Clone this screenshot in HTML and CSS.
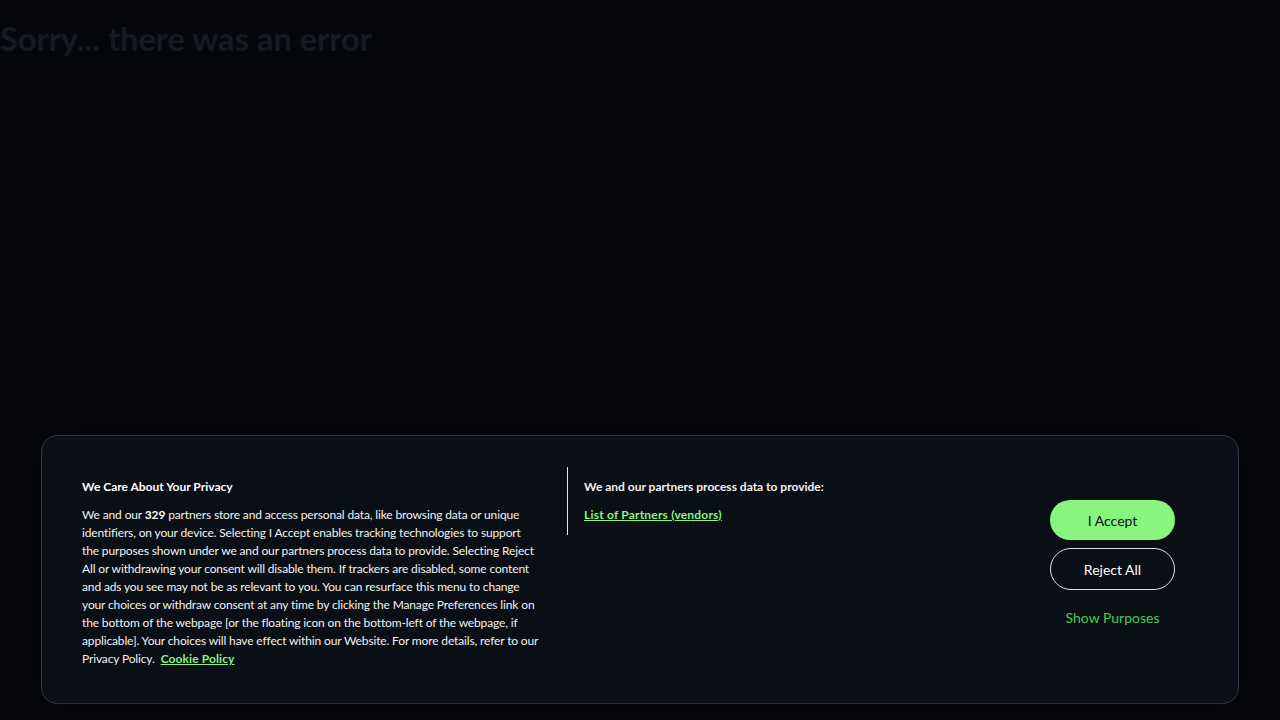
FILE: index.html
```html
<!DOCTYPE html>
<html lang="en">
<head>
<meta charset="utf-8">
<title>Error</title>
<link rel="stylesheet" href="styles.css">
</head>
<body>
<h1 class="error-title">Sorry... there was an error</h1>
<div class="consent">
  <div class="consent-inner">
    <div class="col-policy">
      <h2 class="policy-title">We Care About Your Privacy</h2>
      <p class="policy-text">We and our <strong>329</strong> partners store and access personal data, like browsing data or unique<br>identifiers, on your device. Selecting I Accept enables tracking technologies to support<br>the purposes shown under we and our partners process data to provide. Selecting Reject<br>All or withdrawing your consent will disable them. If trackers are disabled, some content<br>and ads you see may not be as relevant to you. You can resurface this menu to change<br>your choices or withdraw consent at any time by clicking the Manage Preferences link on<br>the bottom of the webpage [or the floating icon on the bottom-left of the webpage, if<br>applicable]. Your choices will have effect within our Website. For more details, refer to our<br>Privacy Policy. <a class="link" href="#">Cookie Policy</a></p>
    </div>
    <div class="col-purposes">
      <h3 class="purposes-title">We and our partners process data to provide:</h3>
      <a class="link" href="#">List of Partners (vendors)</a>
    </div>
    <div class="col-buttons">
      <button class="btn btn-accept">I Accept</button>
      <button class="btn btn-reject">Reject All</button>
      <button class="btn-text">Show Purposes</button>
    </div>
  </div>
</div>
</body>
</html>
```
FILE: styles.css
```css
html, body {
  margin: 0;
  padding: 0;
  background: #05070b;
  height: 100%;
}
body {
  font-family: Lato, "Liberation Sans", sans-serif;
  color: #ffffff;
  position: relative;
  overflow: hidden;
}
.error-title {
  margin: 0;
  padding-top: 19px;
  font-size: 32.6px;
  line-height: 40px;
  font-weight: 700;
  color: #141a23;
}
.consent {
  position: absolute;
  left: 41px;
  top: 435px;
  width: 1198px;
  height: 269px;
  box-sizing: border-box;
  background: #0a0e15;
  border: 1px solid #2b3447;
  border-radius: 16px;
  box-shadow: 0 0 40px rgba(0,0,0,0.5);
}
.consent-inner {
  display: flex;
  align-items: flex-start;
  padding: 31px 40px 0 40px;
}
.col-policy {
  width: 485px;
  flex: none;
  padding-top: 11px;
}
.policy-title {
  margin: 0;
  font-size: 12px;
  line-height: 18px;
  font-weight: 700;
}
.policy-text {
  margin: 10px 0 0 0;
  font-size: 12px;
  line-height: 18px;
  letter-spacing: -0.14px;
  white-space: nowrap;
  color: #f2f2f2;
}
.policy-text strong {
  font-weight: 700;
  color: #fff;
}
.link {
  color: #87f57f;
  font-weight: 700;
  font-size: 12px;
  letter-spacing: 0.1px;
  text-decoration: underline;
  margin-left: 3px;
}
.col-purposes {
  flex: 1;
  border-left: 1px solid #e6e6e6;
  padding: 11px 0 9px 16px;
  height: 48px;
  display: flex;
  flex-direction: column;
  gap: 10px;
  align-items: flex-start;
}
.col-purposes .link {
  margin-left: 0;
  line-height: 18px;
  letter-spacing: 0.2px;
}
.purposes-title {
  margin: 0;
  font-size: 12px;
  line-height: 18px;
  font-weight: 700;
  color: #f2f2f2;
}
.col-buttons {
  width: 125px;
  flex: none;
  margin-right: 23px;
  padding-top: 33px;
  display: flex;
  flex-direction: column;
  align-items: stretch;
}
.btn {
  font-family: Lato, "Liberation Sans", sans-serif;
  font-size: 14px;
  height: 40px;
  border-radius: 20px;
  cursor: pointer;
}
.btn-accept {
  background: #87f57f;
  color: #0a0e15;
  border: none;
}
.btn-reject {
  margin-top: 8px;
  height: 42px;
  background: transparent;
  color: #fff;
  border: 1px solid #e0e0e0;
  border-radius: 21px;
}
.btn-text {
  margin-top: 18px;
  background: none;
  border: none;
  font-family: Lato, "Liberation Sans", sans-serif;
  font-size: 14px;
  line-height: 20px;
  color: #4cc85a;
  padding: 0;
  cursor: pointer;
}
```
